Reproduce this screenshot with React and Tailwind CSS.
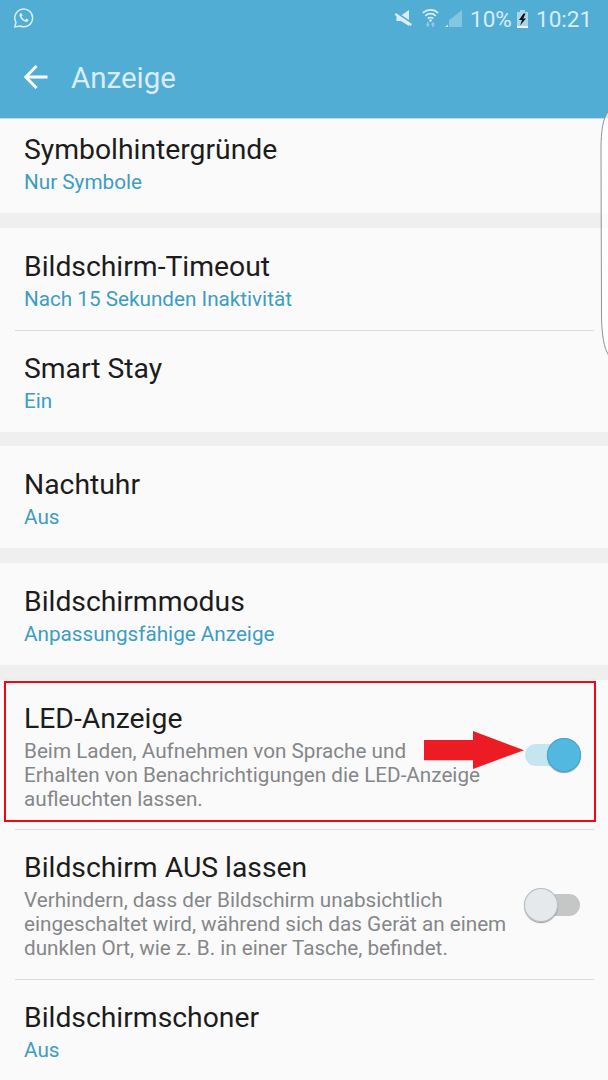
import clsx from 'clsx';

const groups = [
  [{ title: 'Symbolhintergründe', value: 'Nur Symbole' }],
  [
    { title: 'Bildschirm-Timeout', value: 'Nach 15 Sekunden Inaktivität' },
    { title: 'Smart Stay', value: 'Ein' },
  ],
  [{ title: 'Nachtuhr', value: 'Aus' }],
  [{ title: 'Bildschirmmodus', value: 'Anpassungsfähige Anzeige' }],
  [
    {
      title: 'LED-Anzeige',
      lines: [
        'Beim Laden, Aufnehmen von Sprache und',
        'Erhalten von Benachrichtigungen die LED-Anzeige',
        'aufleuchten lassen.',
      ],
      on: true,
      marked: true,
    },
    {
      title: 'Bildschirm AUS lassen',
      lines: [
        'Verhindern, dass der Bildschirm unabsichtlich',
        'eingeschaltet wird, während sich das Gerät an einem',
        'dunklen Ort, wie z. B. in einer Tasche, befindet.',
      ],
      on: false,
    },
    { title: 'Bildschirmschoner', value: 'Aus' },
  ],
];

function WhatsAppIcon() {
  return (
    <svg className="-mt-0.5" width="20" height="20" viewBox="0 0 20 20" fill="none">
      <path d="M2 14.300A8.900 8.900 0 1 1 6.100 18L.8 18.900Z" stroke="#d8edf6" strokeWidth="1.500" />
      <path
        d="M6.500 5.200c-1 .8-1.300 2-.7 3.400 1 2.500 3 4.400 5.500 5.200 1.400.4 2.500-.1 3.100-1.400l-.2-.8-2-1-1.200 1.300c-1.700-.8-2.700-1.800-3.400-3.300l1-1.200-.9-2.200Z"
        fill="#d8edf6"
      />
    </svg>
  );
}

function StatusBar() {
  return (
    <div className="flex h-[38px] items-center pl-[14px] text-[#d8edf6]">
      <WhatsAppIcon />
      <svg className="ml-[360px]" width="69" height="20" viewBox="0 0 69 20" fill="#d8edf6">
        {/* muted speaker */}
        <path d="M2.500 6.500h4.500L15 1v16l-8-5H2.500Z" />
        <path d="M1 3.200 18 14" stroke="#52add5" strokeWidth="2" />
        <path d="M1.200 4.800 17.300 16" stroke="#d8edf6" strokeWidth="2.200" />
        {/* wifi */}
        <g fill="none" stroke="#d8edf6" strokeWidth="1.700">
          <path d="M28.800 4a11 11 0 0 1 15.400 0" />
          <path d="M31.300 6.900a7.300 7.300 0 0 1 10.400 0" />
          <path d="M33.800 9.600a3.900 3.900 0 0 1 5.400 0" />
        </g>
        <circle cx="36.500" cy="11.500" r="1.300" />
        <g opacity=".5">
          <path d="M33 13h1.600v2.500H36L33.800 18l-2.200-2.500H33ZM38.200 18h1.600v-2.500h1.400L39 13l-2.200 2.500h1.400Z" />
        </g>
        {/* signal */}
        <path d="M55 11.200 68 1v17H55Z" opacity=".38" />
        <path d="M51 18l3-2.500V18Z" />
      </svg>
      <span className="ml-[7px] w-[41px] whitespace-nowrap text-[22.5px] leading-[38px]">10%</span>
      <svg className="ml-[5px]" width="13" height="18" viewBox="0 0 13 18">
        <path d="M4 0h5v2h3v16H1V2h3Z" fill="#a9d6ea" />
        <path d="M1 16h11v2H1Z" fill="#eef8fc" />
        <path d="M7.500 3.500 3 10h3L4 15.500l6-7H7.300L9.500 3.500Z" fill="#151515" />
      </svg>
      <span className="ml-[7px] whitespace-nowrap text-[22.5px] leading-[38px]">10:21</span>
    </div>
  );
}

function Toggle({ on }) {
  return (
    <span className="relative mt-px flex h-[34px] w-[57px] shrink-0 items-center">
      <span className={clsx('ml-px h-[22px] w-[55px] rounded-full', on ? 'bg-[#c5e6f1]' : 'bg-[#c5c7c6]')} />
      <span
        className={clsx(
          'absolute top-0 size-[34px] rounded-full',
          on
            ? 'right-0 bg-[#52b8e0] shadow-[0_1px_1px_rgba(0,0,0,0.4),inset_0_0_0_1px_#49a5ca]'
            : 'left-0 bg-[#e6e9eb] shadow-[0_1px_1px_rgba(0,0,0,0.4),inset_0_0_0_1px_#b9bdbf]'
        )}
      />
    </span>
  );
}

function Highlight() {
  return (
    <>
      <div className="absolute left-[4px] top-[1.5px] h-[141px] w-[592px] border-2 border-[#f3060e]" />
      <svg className="absolute left-[424px] top-[51.5px]" width="101" height="39" viewBox="0 0 101 39">
        <path d="M0 9h49V0l51 19.200L49 38V29.200H0Z" fill="#ed1c24" />
      </svg>
    </>
  );
}

function rowHeight(item, first, divided) {
  if (item.lines) return 'h-[149.2px]';
  if (first) return 'h-[95px]';
  return divided ? 'h-[101px]' : 'h-[102px]';
}

function Row({ item, first, divided }) {
  return (
    <div className="relative">
      {divided && <div className="ml-[15px] mr-[14px] h-px bg-[#dcdcdc]" />}
      <div className={clsx('flex items-center justify-between pl-6 pr-[27px]', rowHeight(item, first, divided))}>
        <div className={clsx('self-start whitespace-nowrap', first ? 'pt-[15px]' : divided ? 'pt-[21px]' : 'pt-[22px]')}>
          <h2 className="text-[28.3px] leading-[34px] text-[#1c1c1c]">{item.title}</h2>
          {item.value && <p className="mt-[3px] text-[20.7px] leading-6 text-[#3d9dc3]">{item.value}</p>}
          {item.lines && (
            <div className="mt-[3px] text-[20.7px] leading-6 text-[#858789]">
              {item.lines.map((line) => (
                <p key={line}>{line}</p>
              ))}
            </div>
          )}
        </div>
        {item.lines && <Toggle on={item.on} />}
      </div>
      {item.marked && <Highlight />}
    </div>
  );
}

// Edge panel handle at the right side of the screen
function EdgePanel() {
  return (
    <svg className="absolute right-0 top-[108px]" width="8" height="250" viewBox="0 0 8 250" fill="none">
      <path
        d="M8.500 3C3 10 1 22 1 42L1.500 206C1.500 226 4 240 8.500 247"
        fill="#fff"
        fillOpacity=".75"
        stroke="#8b9499"
        strokeWidth="1"
      />
    </svg>
  );
}

export default function App() {
  return (
    <div className="relative h-[1080px] w-[608px] overflow-hidden bg-[#efefef] font-[Roboto,sans-serif]">
      <header className="relative h-[118px] bg-[#52add5] shadow-[0_1px_0_#cdd6df]">
        <StatusBar />
        <div className="flex h-20 items-center pl-6">
          <svg className="-mt-0.5" width="24" height="24" viewBox="0 0 24 24" fill="none" stroke="#fff" strokeWidth="2.800">
            <path d="M12.500 1 1.800 12l10.700 11M2 12h21.500" />
          </svg>
          <h1 className="ml-[23px] text-[29.5px] text-[#d8edf6]">Anzeige</h1>
        </div>
      </header>
      <main className="flex flex-col gap-[14.67px]">
        {groups.map((items, g) => (
          <section key={g} className="bg-[#fafafa]">
            {items.map((item, i) => (
              <Row key={item.title} item={item} first={g === 0} divided={i > 0} />
            ))}
          </section>
        ))}
      </main>
      <EdgePanel />
    </div>
  );
}
